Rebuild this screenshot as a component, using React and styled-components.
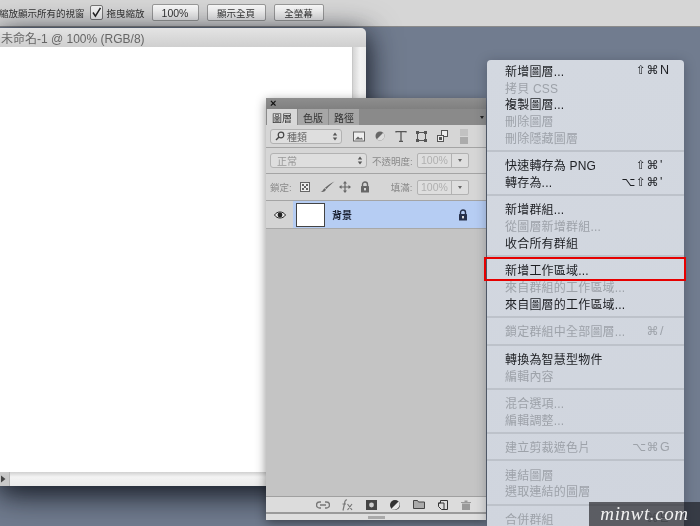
import React from 'react';
import styled, { createGlobalStyle } from 'styled-components';

const GlobalStyle = createGlobalStyle`
    html, body {
        margin: 0;
        padding: 0;
        height: 100%;
        overflow: hidden;
        font-family: "Liberation Sans", "Noto Sans CJK TC", sans-serif;
    }
    #root { height: 100%; }
`;

const Desktop = styled.div`
    position: relative;
    width: 700px;
    height: 526px;
    overflow: hidden;
    background: #717c8f;
    filter: blur(0.35px);
`;

/* options bar */
const OptionsBar = styled.div`
    display: flex;
    align-items: center;
    height: 27px;
    box-sizing: border-box;
    padding: 0 0 1px 0;
    background: #d6d6d6;
    border-bottom: 1px solid #8b8b8b;
    color: #333;
    font-size: 9.5px;
`;

const OptionLabel = styled.span`
    margin-left: ${p => p.$left || 0}px;
    white-space: nowrap;
`;

const CheckBox = styled.span`
    display: flex;
    align-items: center;
    justify-content: center;
    width: 11px;
    height: 13px;
    margin: 0 4px 0 5px;
    background: #f4f4f4;
    border: 1px solid #777;
    border-radius: 2px;
    svg { display: block; }
`;

const BarButton = styled.span`
    display: flex;
    align-items: center;
    justify-content: center;
    width: ${p => p.$width}px;
    height: 15px;
    margin-left: ${p => p.$gap}px;
    background: linear-gradient(#fafafa, #ececec);
    border: 1px solid #999;
    border-radius: 2px;
    font-size: ${p => p.$size || 9.5}px;
    color: #333;
`;

/* document window */
const DocWindow = styled.div`
    position: absolute;
    left: 0;
    top: 28px;
    width: 366px;
    height: 458px;
    display: flex;
    flex-direction: column;
    border-top-right-radius: 5px;
    overflow: hidden;
    box-shadow: 0 6px 22px rgba(15, 20, 30, 0.6), 0 8px 34px rgba(20, 24, 34, 0.75);
`;

const DocTitle = styled.div`
    height: 19px;
    flex: none;
    display: flex;
    align-items: center;
    padding-left: 1px;
    background: linear-gradient(#e4e4e4, #cfcfcf);
    color: #666;
    font-size: 12px;
`;

const DocBody = styled.div`
    flex: 1;
    display: flex;
    min-height: 0;
`;

const Canvas = styled.div`
    flex: 1;
    background: #fff;
`;

const VScroll = styled.div`
    width: 14px;
    background: linear-gradient(90deg, #d5d5d5, #f3f3f3 55%, #ededed);
    border-left: 1px solid #c8c8c8;
    box-sizing: border-box;
`;

const HScroll = styled.div`
    height: 14px;
    flex: none;
    display: flex;
    background: linear-gradient(#d0d0d0, #f3f3f3 35%, #ebebeb);
`;

const ScrollArrow = styled.div`
    width: 9px;
    display: flex;
    align-items: center;
    background: #c9c9c9;
    border-right: 1px solid #b5b5b5;
`;

/* layers panel */
const Panel = styled.div`
    position: absolute;
    left: 266px;
    top: 98px;
    width: 220px;
    height: 422px;
    display: flex;
    flex-direction: column;
    background: #c4c4c4;
    color: #777;
    font-size: 11px;
    box-shadow: 0 3px 10px rgba(0, 0, 0, 0.45);
`;

const PanelTitle = styled.div`
    height: 11px;
    flex: none;
    display: flex;
    align-items: center;
    padding-left: 4px;
    background: linear-gradient(#8e8e8e, #808080);
    color: #111;
    font-size: 11px;
    font-weight: 700;
    line-height: 11px;
`;

const TabStrip = styled.div`
    height: 16px;
    flex: none;
    display: flex;
    background: #8a8a8a;
    padding-left: 1px;
`;

const Tab = styled.div`
    width: 30px;
    margin-right: 1px;
    display: flex;
    align-items: center;
    justify-content: center;
    background: ${p => (p.$active ? '#d8d8d8' : '#a6a6a6')};
    color: #333;
    font-size: 10px;
`;

const TabMenu = styled.span`
    margin-left: auto;
    align-self: center;
    margin-right: 2px;
    width: 0;
    height: 0;
    border-left: 2px solid transparent;
    border-right: 2px solid transparent;
    border-top: 3px solid #222;
`;

const ControlRow = styled.div`
    height: ${p => p.$height}px;
    box-sizing: border-box;
    flex: none;
    display: flex;
    align-items: center;
    padding: 0 17px 0 4px;
    background: #d6d6d6;
    border-bottom: 1px solid #a4a4a4;
`;

const SelectBox = styled.div`
    width: ${p => p.$width}px;
    height: 15px;
    flex: none;
    box-sizing: border-box;
    display: flex;
    align-items: center;
    padding: 0 3px 0 ${p => p.$pad || 6}px;
    gap: 2px;
    background: #dedede;
    border: 1px solid #b2b2b2;
    border-radius: 3px;
    color: ${p => p.$color || '#999'};
    font-size: 10px;
    svg { flex: none; }
`;

const UpDown = styled.svg`
    margin-left: auto;
`;

const IconSlot = styled.span`
    display: flex;
    align-items: center;
    justify-content: center;
    width: ${p => p.$width || 21}px;
    flex: none;
`;

const FieldLabel = styled.span`
    margin-left: ${p => p.$left}px;
    color: #8a8a8a;
    font-size: 9.5px;
    white-space: nowrap;
`;

const PercentBox = styled.div`
    display: flex;
    width: 52px;
    height: 15px;
    margin-left: auto;
    box-sizing: border-box;
    background: #dedede;
    border: 1px solid #b2b2b2;
    border-radius: 2px;
    color: #b0b0b0;
    font-size: 10.5px;
    line-height: 13px;
`;

const PercentValue = styled.span`
    flex: 1;
    padding-left: 3px;
    border-right: 1px solid #b2b2b2;
`;

const PercentDrop = styled.span`
    width: 16px;
    display: flex;
    align-items: center;
    justify-content: center;
    &::after {
        content: '';
        border-left: 2px solid transparent;
        border-right: 2px solid transparent;
        border-top: 3px solid #666;
    }
`;

const LayerRow = styled.div`
    height: 28px;
    box-sizing: border-box;
    flex: none;
    display: flex;
    align-items: center;
    background: #b6cdf3;
    border-bottom: 1px solid #a8a8a8;
`;

const EyeCell = styled.div`
    width: 27px;
    height: 100%;
    display: flex;
    align-items: center;
    justify-content: center;
    background: #d4d4d4;
    flex: none;
`;

const Thumb = styled.div`
    width: 27px;
    height: 22px;
    margin-left: 3px;
    background: #fff;
    border: 1px solid #444;
    flex: none;
`;

const LayerName = styled.span`
    margin-left: 7px;
    color: #1b2233;
    font-size: 10px;
    font-weight: 700;
`;

const LayerLock = styled.span`
    margin-left: auto;
    margin-right: 18px;
    display: flex;
`;

const EmptyList = styled.div`
    flex: 1;
    background: #c4c4c4;
`;

const PanelFooter = styled.div`
    height: 18px;
    box-sizing: border-box;
    flex: none;
    display: flex;
    align-items: center;
    justify-content: flex-end;
    padding-right: 9px;
    background: #dcdcdc;
    border-top: 1px solid #a0a0a0;
    border-bottom: 2px solid #9a9a9a;
`;

const FooterSlot = styled.span`
    width: ${p => p.$width || 24}px;
    display: flex;
    justify-content: center;
`;

const GripBar = styled.div`
    height: 6px;
    flex: none;
    display: flex;
    justify-content: center;
    align-items: center;
    background: #dedede;
    &::after {
        content: '';
        width: 17px;
        height: 3px;
        background: #a9a9a9;
    }
`;

/* context menu */
const Menu = styled.div`
    position: absolute;
    left: 487px;
    top: 60px;
    width: 197px;
    height: 480px;
    box-sizing: border-box;
    padding-top: 1.8px;
    background: linear-gradient(#d3d8e0, #d0d5de);
    border-radius: 4px 4px 0 0;
    box-shadow: 0 2px 12px rgba(30, 35, 45, 0.35);
`;

const MenuRow = styled.div`
    height: 16.8px;
    display: flex;
    align-items: center;
    padding: 0 12px 0 18px;
    font-size: 12px;
    letter-spacing: 0.2px;
    white-space: nowrap;
    color: ${p => (p.$off ? '#9da2a9' : '#1c1e22')};
`;

const Shortcut = styled.span`
    margin-left: auto;
    display: flex;
    align-items: center;
    font-family: "DejaVu Sans", "Liberation Sans", sans-serif;
    font-size: 12px;
    letter-spacing: 0.5px;
`;

const ShortcutKey = styled.span`
    width: 12px;
    margin-left: 1px;
    font-family: "Liberation Sans", sans-serif;
    font-size: 12.5px;
`;

const MenuSep = styled.div`
    height: 10.6px;
    display: flex;
    align-items: center;
    &::after {
        content: '';
        flex: 1;
        height: 2px;
        background: #bdc2ca;
    }
`;

const Highlight = styled.div`
    position: absolute;
    left: 484px;
    top: 257px;
    width: 202px;
    height: 24px;
    box-sizing: border-box;
    border: 2px solid #e60000;
`;

const Watermark = styled.div`
    position: absolute;
    right: 0;
    bottom: 0;
    width: 111px;
    height: 24px;
    display: flex;
    align-items: center;
    justify-content: center;
    background: rgba(20, 20, 24, 0.62);
    color: #f2f2f2;
    font-family: "Liberation Serif", serif;
    font-style: italic;
    font-size: 19px;
    letter-spacing: 0.6px;
`;

const menuItems = [
    { label: '新增圖層...', mods: '⇧⌘', key: 'N' },
    { label: '拷貝 CSS', off: true },
    { label: '複製圖層...' },
    { label: '刪除圖層', off: true },
    { label: '刪除隱藏圖層', off: true },
    'sep',
    { label: '快速轉存為 PNG', mods: '⇧⌘', key: "'" },
    { label: '轉存為...', mods: '⌥⇧⌘', key: "'" },
    'sep',
    { label: '新增群組...' },
    { label: '從圖層新增群組...', off: true },
    { label: '收合所有群組' },
    'sep',
    { label: '新增工作區域...' },
    { label: '來自群組的工作區域...', off: true },
    { label: '來自圖層的工作區域...' },
    'sep',
    { label: '鎖定群組中全部圖層...', off: true, mods: '⌘', key: '/' },
    'sep',
    { label: '轉換為智慧型物件' },
    { label: '編輯內容', off: true },
    'sep',
    { label: '混合選項...', off: true },
    { label: '編輯調整...', off: true },
    'sep',
    { label: '建立剪裁遮色片', off: true, mods: '⌥⌘', key: 'G' },
    'sep',
    { label: '連結圖層', off: true },
    { label: '選取連結的圖層', off: true },
    'sep',
    { label: '合併群組', off: true, mods: '⌘', key: 'E' },
];

const Svg = ({ w = 14, h = 14, children }) => (
    <svg width={w} height={h} viewBox={`0 0 ${w} ${h}`}>{children}</svg>
);

const LockIcon = ({ color = '#666' }) => (
    <Svg w={10} h={12}>
        <path d="M2.5 5V3.5a2.5 2.5 0 0 1 5 0V5" fill="none" stroke={color} strokeWidth="1.4" />
        <rect x="1" y="5" width="8" height="6.5" rx="0.5" fill={color} />
        <rect x="4" y="7" width="2" height="2.4" fill="#d8d8d8" />
    </Svg>
);

const UpDownIcon = () => (
    <UpDown width="6" height="9" viewBox="0 0 6 9">
        <path d="M3 0.5 5.2 3.5H0.8ZM3 8.5 0.8 5.5H5.2Z" fill="#555" />
    </UpDown>
);

const App = () => (
    <Desktop>
        <GlobalStyle />
        <OptionsBar>
            <OptionLabel $left={-1}>縮放顯示所有的視窗</OptionLabel>
            <CheckBox>
                <svg width="11" height="11" viewBox="0 0 11 11">
                    <path d="M2 5.5 4.4 9.2 9.5 0.8" fill="none" stroke="#222" strokeWidth="1.5" />
                </svg>
            </CheckBox>
            <OptionLabel>拖曳縮放</OptionLabel>
            <BarButton $width={45} $gap={7} $size={10.5}>100%</BarButton>
            <BarButton $width={57} $gap={8}>顯示全頁</BarButton>
            <BarButton $width={48} $gap={8}>全螢幕</BarButton>
        </OptionsBar>

        <DocWindow>
            <DocTitle>未命名-1 @ 100% (RGB/8)</DocTitle>
            <DocBody>
                <Canvas />
                <VScroll />
            </DocBody>
            <HScroll>
                <ScrollArrow>
                    <svg width="6" height="8" viewBox="0 0 6 8"><path d="M1 0.5 5.5 4 1 7.5Z" fill="#444" /></svg>
                </ScrollArrow>
            </HScroll>
        </DocWindow>

        <Panel>
            <PanelTitle>×</PanelTitle>
            <TabStrip>
                <Tab $active>圖層</Tab>
                <Tab>色版</Tab>
                <Tab>路徑</Tab>
                <TabMenu />
            </TabStrip>
            <ControlRow $height={23}>
                <SelectBox $width={72} $pad={4} $color="#666">
                    <svg width="10" height="10" viewBox="0 0 10 10">
                        <circle cx="6" cy="4" r="2.8" fill="none" stroke="#444" strokeWidth="1.2" />
                        <path d="M4 6 1 9" stroke="#444" strokeWidth="1.5" />
                    </svg>
                    種類
                    <UpDownIcon />
                </SelectBox>
                <IconSlot $width={6} />
                <IconSlot>
                    <Svg w={12} h={11}>
                        <rect x="0.5" y="1" width="11" height="9" fill="#eee" stroke="#666" />
                        <path d="M2 8.5 5 5.5 7 7.5 8.5 6.5 10 8.5Z" fill="#666" />
                    </Svg>
                </IconSlot>
                <IconSlot>
                    <Svg w={10} h={10}>
                        <circle cx="5" cy="5" r="4.5" fill="#666" />
                        <path d="M8.2 1.8A4.5 4.5 0 0 1 1.8 8.2Z" fill="#ddd" />
                    </Svg>
                </IconSlot>
                <IconSlot>
                    <svg width="12" height="11" viewBox="0 0 12 11">
                        <path d="M1 1.5V0.7H11V1.5M6 0.7V10.3M4 10.3H8" fill="none" stroke="#555" strokeWidth="1.3" />
                    </svg>
                </IconSlot>
                <IconSlot>
                    <Svg w={11} h={11}>
                        <rect x="1.5" y="1.5" width="8" height="8" fill="none" stroke="#555" />
                        <path d="M0 0H3V3H0ZM8 0H11V3H8ZM0 8H3V11H0ZM8 8H11V11H8Z" fill="#555" />
                    </Svg>
                </IconSlot>
                <IconSlot>
                    <Svg w={11} h={12}>
                        <rect x="4.5" y="0.5" width="6" height="6" fill="#eee" stroke="#555" />
                        <rect x="0.5" y="5.5" width="6" height="6" fill="#eee" stroke="#555" />
                        <rect x="2" y="7" width="3" height="3" fill="#555" />
                    </Svg>
                </IconSlot>
                <IconSlot>
                    <Svg w={8} h={15}>
                        <rect x="0" y="0" width="8" height="7" fill="#c2c2c2" />
                        <rect x="0" y="8" width="8" height="7" fill="#ababab" />
                    </Svg>
                </IconSlot>
            </ControlRow>
            <ControlRow $height={26}>
                <SelectBox $width={97}>
                    正常
                    <UpDownIcon />
                </SelectBox>
                <FieldLabel $left={5}>不透明度:</FieldLabel>
                <PercentBox>
                    <PercentValue>100%</PercentValue>
                    <PercentDrop />
                </PercentBox>
            </ControlRow>
            <ControlRow $height={27}>
                <FieldLabel $left={0}>鎖定:</FieldLabel>
                <IconSlot $width={26}>
                    <Svg w={10} h={10}>
                        <rect x="0.5" y="0.5" width="9" height="9" fill="#eee" stroke="#666" />
                        <path d="M2 2H4V4H2ZM6 2H8V4H6ZM4 4H6V6H4ZM2 6H4V8H2ZM6 6H8V8H6Z" fill="#666" />
                    </Svg>
                </IconSlot>
                <IconSlot $width={19}>
                    <Svg w={15} h={12}>
                        <path d="M14.5 0.5C12 2.5 9 5 6.5 8L5 6.8C8 4.2 11 2 14.5 0.5Z" fill="#666" />
                        <path d="M4.6 7.2 6 8.6C5 10.8 3 11.4 0.5 11C2.5 10.5 3 8.4 4.6 7.2Z" fill="#666" />
                    </Svg>
                </IconSlot>
                <IconSlot $width={16}>
                    <Svg w={12} h={12}>
                        <path d="M6 0 8 2.5H6.6V5.4H9.5V4L12 6 9.5 8V6.6H6.6V9.5H8L6 12 4 9.5H5.4V6.6H2.5V8L0 6 2.5 4V5.4H5.4V2.5H4Z" fill="#666" />
                    </Svg>
                </IconSlot>
                <IconSlot $width={24}><LockIcon /></IconSlot>
                <FieldLabel $left={14}>填滿:</FieldLabel>
                <PercentBox>
                    <PercentValue>100%</PercentValue>
                    <PercentDrop />
                </PercentBox>
            </ControlRow>
            <LayerRow>
                <EyeCell>
                    <Svg w={12} h={8}>
                        <path d="M0.5 4C3 0 9 0 11.5 4 9 8 3 8 0.5 4Z" fill="#eee" stroke="#222" />
                        <circle cx="6" cy="4" r="2.4" fill="#222" />
                    </Svg>
                </EyeCell>
                <Thumb />
                <LayerName>背景</LayerName>
                <LayerLock><LockIcon color="#26304a" /></LayerLock>
            </LayerRow>
            <EmptyList />
            <PanelFooter>
                <FooterSlot>
                    <Svg w={14} h={8}>
                        <path d="M5 1H3.5a3 3 0 0 0 0 6H5M9 1h1.500a3 3 0 0 1 0 6H9M4 4H10" fill="none" stroke="#777" strokeWidth="1.4" />
                    </Svg>
                </FooterSlot>
                <FooterSlot>
                    <svg width="14" height="12" viewBox="0 0 14 12">
                        <path d="M3 11.500 5 2.500C5.200 1.200 6 0.800 7 1M2.500 5H6M7.500 5 12 11M12 5 7.500 11" fill="none" stroke="#777" strokeWidth="1.2" />
                    </svg>
                </FooterSlot>
                <FooterSlot>
                    <Svg w={11} h={10}>
                        <rect width="11" height="10" fill="#444" />
                        <circle cx="5.500" cy="5" r="2.400" fill="#ccc" />
                    </Svg>
                </FooterSlot>
                <FooterSlot>
                    <Svg w={10} h={10}>
                        <circle cx="5" cy="5" r="5" fill="#333" />
                        <path d="M8.500 1.500A5 5 0 0 1 1.500 8.500Z" fill="#e8e8e8" />
                    </Svg>
                </FooterSlot>
                <FooterSlot>
                    <Svg w={12} h={9}>
                        <path d="M0.500 8.500V0.500H4.500L5.500 2H11.500V8.500Z" fill="#aaa" stroke="#444" />
                    </Svg>
                </FooterSlot>
                <FooterSlot>
                    <Svg w={10} h={10}>
                        <path d="M2.500 0.500H9.500V9.500H3.500L0.500 6.500V3H2.500Z" fill="#ddd" stroke="#333" />
                        <path d="M0.500 3H6V9" fill="none" stroke="#333" />
                    </Svg>
                </FooterSlot>
                <FooterSlot $width={22}>
                    <Svg w={10} h={10}>
                        <path d="M0 2H10V3H0ZM3.500 0.500H6.500V2H3.500ZM1 3.500H9V10H1Z" fill="#999" />
                    </Svg>
                </FooterSlot>
            </PanelFooter>
            <GripBar />
        </Panel>

        <Menu>
            {menuItems.map((item, i) =>
                item === 'sep' ? (
                    <MenuSep key={i} />
                ) : (
                    <MenuRow key={i} $off={item.off}>
                        {item.label}
                        {item.key && (
                            <Shortcut>
                                {item.mods}
                                <ShortcutKey>{item.key}</ShortcutKey>
                            </Shortcut>
                        )}
                    </MenuRow>
                )
            )}
        </Menu>

        <Highlight />
        <Watermark>minwt.com</Watermark>
    </Desktop>
);

export default App;
